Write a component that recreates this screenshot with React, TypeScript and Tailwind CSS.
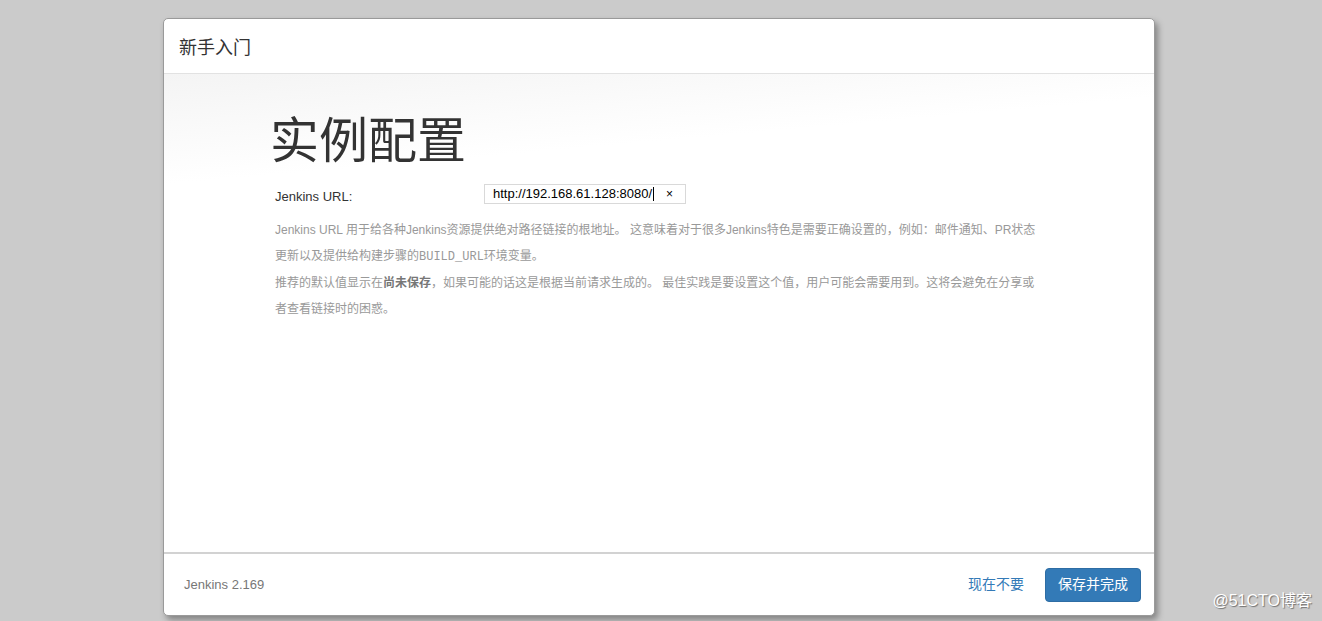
import React from "react";

const sans = { fontFamily: '"Liberation Sans", Arial, "Noto Sans CJK SC", sans-serif' };

export default function App() {
  return (
    <div
      className="relative w-[1322px] h-[621px] bg-[#cbcbcb] overflow-hidden pt-[18px] pl-[163px]"
      style={sans}
    >
      <div className="w-[992px] h-[598px] bg-white rounded-[5px] border border-[#9a9a9a] shadow-[3px_4px_6px_rgba(0,0,0,0.35)] flex flex-col overflow-hidden">
        {/* header */}
        <div className="h-[55px] shrink-0 flex items-center pl-[15px] border-b border-[#e2e2e2]">
          <span className="text-[18px] text-[#333] leading-none pt-[3px]">新手入门</span>
        </div>
        {/* body */}
        <div className="flex-1 bg-[linear-gradient(175deg,#f4f4f4_0px,#ffffff_110px)] pl-[108px] pt-[40px]">
          <h1 className="text-[49px] leading-[54px] text-[#333] ml-[-2px]">实例配置</h1>
          <div className="flex items-center mt-[16px] h-[20px]">
            <span className="w-[212px] pl-[3px] text-[13px] text-[#333] pt-[5px]">Jenkins URL:</span>
            <div className="w-[202px] h-[20px] border border-[#d9d9d9] flex items-center pl-[8px] pr-[12px] text-[13px] text-black">
              <span>http://192.168.61.128:8080/</span>
              <span className="w-px h-[14px] bg-black ml-[1px]" />
              <span className="ml-auto text-[12px]">×</span>
            </div>
          </div>
          <div className="w-[765px] pl-[3px] mt-[14px] text-[12px] text-[#999] leading-[25.5px]">
            <p>
              Jenkins URL 用于给各种Jenkins资源提供绝对路径链接的根地址。 这意味着对于很多Jenkins特色是需要正确设置的，例如：邮件通知、PR状态更新以及提供给构建步骤的
              <span style={{ fontFamily: '"Liberation Mono", "Courier New", monospace' }}>BUILD_URL</span>环境变量。
            </p>
            <p className="mt-[1px]">
              推荐的默认值显示在<b className="text-[#777]">尚未保存</b>，如果可能的话这是根据当前请求生成的。 最佳实践是要设置这个值，用户可能会需要用到。这将会避免在分享或者查看链接时的困惑。
            </p>
          </div>
        </div>
        {/* footer */}
        <div className="h-[63px] shrink-0 border-t-2 border-[#d2d2d2] flex items-center pl-[20px] pr-[13px]">
          <span className="text-[13px] text-[#777] pt-[1px]">Jenkins 2.169</span>
          <a className="ml-auto text-[14px] text-[#337ab7] mr-[21px]">现在不要</a>
          <button className="h-[34px] w-[96px] rounded-[4px] bg-[#337ab7] border border-[#2e6da4] text-white text-[14px]">
            保存并完成
          </button>
        </div>
      </div>
      <div
        className="absolute right-[10px] bottom-[8px] text-[16px] text-white [text-shadow:1px_1px_1px_rgba(0,0,0,0.45)]"
      >
        @51CTO博客
      </div>
    </div>
  );
}
